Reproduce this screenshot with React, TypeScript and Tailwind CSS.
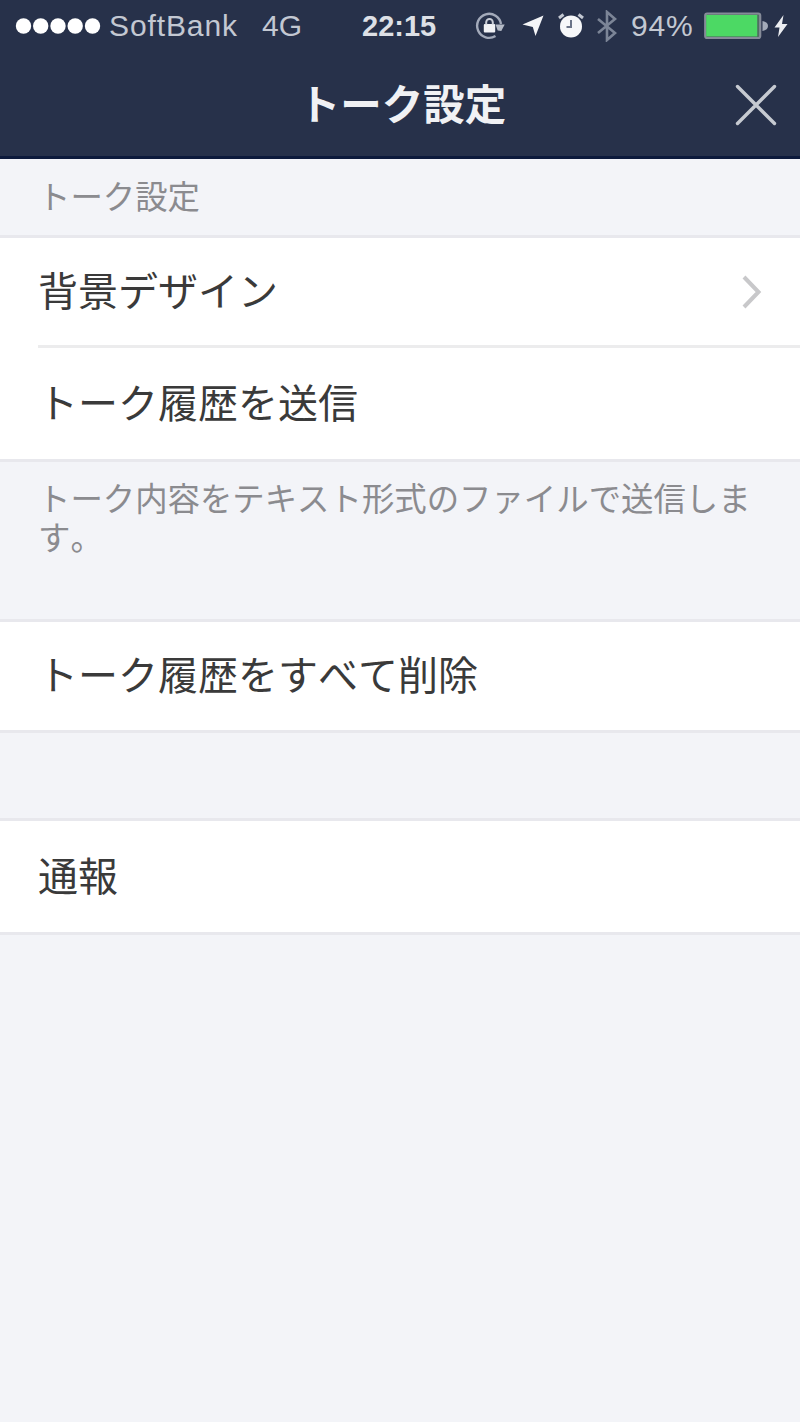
import type { ReactNode } from "react";

const SignalDots = () => (
  <svg width="86" height="18" viewBox="0 0 86 18" fill="#fff">
    {[8.5, 25.7, 43, 60.2, 77.5].map((cx) => (
      <circle key={cx} cx={cx} cy="9" r="7.7" />
    ))}
  </svg>
);

const RotationLockIcon = () => (
  <svg width="30" height="30" viewBox="0 0 30 30" fill="none">
    <path d="M20.5 25A12 12 0 1 1 26 13" stroke="#a3aaba" strokeWidth="2.4" />
    <path d="M20.5 13.5h9.2l-3.4 6.5-3.6-.6z" fill="#b4bac6" />
    <rect x="8.8" y="13" width="11.4" height="8.5" rx="1" fill="#f1f2f5" />
    <path d="M11.2 13.5v-2.2a3.3 3.3 0 0 1 6.6 0v2.2" stroke="#c9cdd6" strokeWidth="2" />
  </svg>
);

const LocationIcon = () => (
  <svg width="24" height="24" viewBox="0 0 24 24" fill="#f4f5f7">
    <path d="M22.5 1.5L14.5 22 11.8 13 1.5 10.5z" />
  </svg>
);

const AlarmIcon = () => (
  <svg width="28" height="26" viewBox="0 0 28 26" fill="none">
    <circle cx="14" cy="13.4" r="11" fill="#f6f7f9" />
    <path d="M2 5L6.5 1.5M26 5L21.5 1.5" stroke="#c3c8d2" strokeWidth="3" />
    <path d="M14 7v7H9.5" stroke="#6b7488" strokeWidth="2" />
  </svg>
);

const BluetoothIcon = () => (
  <svg width="20" height="32" viewBox="0 0 20 32" fill="none" stroke="#7c8597" strokeWidth="2.6">
    <path d="M1 9l17 14-8 7V2l8 7L1 23" />
  </svg>
);

const BatteryIcon = () => (
  <svg width="66" height="28" viewBox="0 0 66 28">
    <rect x="1.2" y="1.5" width="55" height="24.5" rx="2" fill="#4f6f62" stroke="#858b98" strokeWidth="2.2" />
    <rect x="2.2" y="3" width="51" height="21.4" fill="#4cd964" />
    <path d="M58.5 9q5.5 1 5.5 5t-5.5 5z" fill="#a4abb9" />
  </svg>
);

const BoltIcon = () => (
  <svg width="14" height="24" viewBox="0 0 14 24" fill="#eceef2">
    <path d="M9.5 1L0.5 13.5h5L4 23 13.5 10H8z" />
  </svg>
);

const StatusBar = () => (
  <div className="flex h-[52px] items-center pl-[15px] font-['Liberation_Sans',sans-serif] text-[30px] leading-none text-[#c3c8d2]">
    <SignalDots />
    <span className="ml-2 w-[153px] tracking-[0.9px]">SoftBank</span>
    <span className="w-[100px]">4G</span>
    <span className="w-[113px] text-[29px] font-bold text-[#dde0e6]">22:15</span>
    <RotationLockIcon />
    <div className="ml-[16px]">
      <LocationIcon />
    </div>
    <div className="ml-[12px]">
      <AlarmIcon />
    </div>
    <div className="ml-[12px]">
      <BluetoothIcon />
    </div>
    <span className="ml-[14px] w-[73px] tracking-[0.8px]">94%</span>
    <BatteryIcon />
    <div className="ml-[4px]">
      <BoltIcon />
    </div>
  </div>
);

const Header = () => (
  <header className="h-[159px] border-b-3 border-[#0d1a3c] bg-[#27314a]">
    <StatusBar />
    <div className="grid h-[105px] grid-cols-[65px_1fr_65px] items-center">
      <h1 className="col-start-2 pb-[4px] pl-[5px] text-center text-[41.5px] leading-none font-bold text-[#f0f1f4]">
        トーク設定
      </h1>
      <svg width="42" height="42" viewBox="0 0 42 42" stroke="#c6cad1" strokeWidth="3.4" strokeLinecap="round">
        <path d="M2.5 2.5l37 37M39.5 2.5l-37 37" />
      </svg>
    </div>
  </header>
);

type RowProps = {
  children: ReactNode;
  height?: string;
  arrow?: boolean;
};

const Row = ({ children, height = "h-[108px]", arrow }: RowProps) => (
  <div
    className={`flex ${height} items-center justify-between pr-[37px] pl-[38px] text-[40px] leading-none text-[#3a3a3a]`}
  >
    <span className="pb-[6px]">{children}</span>
    {arrow && (
      <svg width="22" height="34" viewBox="0 0 22 34" fill="none" stroke="#c8c8ca" strokeWidth="4">
        <path d="M3 2l14.5 15L3 32" />
      </svg>
    )}
  </div>
);

export default function App() {
  return (
    <div className="min-h-[1422px] w-[800px] bg-[#f3f4f8] font-['Noto_Sans_CJK_JP',sans-serif] [font-kerning:none]">
      <Header />
      <h2 className="flex h-[76px] items-center pb-[4px] pl-[38px] text-[32.4px] leading-none text-[#8b8b8f]">
        トーク設定
      </h2>
      <section className="border-y-3 border-[#e8e8ed] bg-white">
        <Row height="h-[107px]" arrow>
          背景デザイン
        </Row>
        <div className="ml-[38px] h-[3px] bg-[#ececed]" />
        <Row height="h-[111px]">トーク履歴を送信</Row>
      </section>
      <p className="h-[157px] pt-[15px] pr-[40px] pl-[38px] text-[32.4px] leading-[39px] text-[#8b8b8f]">
        トーク内容をテキスト形式のファイルで送信します。
      </p>
      <section className="border-y-3 border-[#e8e8ed] bg-white">
        <Row>トーク履歴をすべて削除</Row>
      </section>
      <section className="mt-[85px] border-y-3 border-[#e8e8ed] bg-white">
        <Row height="h-[111px]">通報</Row>
      </section>
    </div>
  );
}
